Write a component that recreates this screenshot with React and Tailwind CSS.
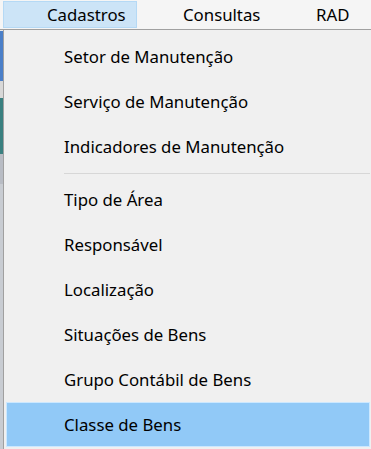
export default function App() {
  const groupA = ["Setor de Manutenção", "Serviço de Manutenção", "Indicadores de Manutenção"];
  const groupB = ["Tipo de Área", "Responsável", "Localização", "Situações de Bens", "Grupo Contábil de Bens"];
  return (
    <div className="w-[371px] h-[449px] bg-[#f0f0f0] overflow-hidden flex flex-col text-[16.8px] text-black" style={{ fontFamily: '"Noto Sans", "Open Sans", sans-serif' }}>
      <div className="h-[30px] shrink-0 flex items-start bg-[#f5f5f5] border-b border-[#a0a0a0]">
        <div className="ml-[3px] mt-[1px] h-[27px] w-[134px] bg-[#cce4f7] border border-[#b5d9f5] flex items-center pl-[43px]">Cadastros</div>
        <div className="h-[29px] w-[133px] flex items-center pl-[46px]">Consultas</div>
        <div className="h-[29px] flex items-center pl-[46px]">RAD</div>
      </div>
      <div className="flex flex-1">
        <div className="w-[3px] flex flex-col bg-[#c8ccd2]">
          <div className="h-[1px] bg-[#e8e8e8]" />
          <div className="h-[50px] bg-[#4a7fc8]" />
          <div className="h-[17px] bg-[#d8d8d8]" />
          <div className="h-[56px] bg-[#3a8080]" />
          <div className="h-[30px] bg-[#b8bcc4]" />
          <div className="flex-1 bg-[#c8ccd2]" />
        </div>
        <div className="flex-1 border-l border-[#a0a0a0] bg-[#f0f0f0] pt-[4px] pl-[2px] pr-[1px]">
          {groupA.map((t) => (
            <div key={t} className="h-[45px] flex items-center pl-[57px] border border-transparent">{t}</div>
          ))}
          <div className="h-[8px] flex items-center pl-[58px]">
            <div className="h-px w-full bg-[#d7d7d7]" />
          </div>
          {groupB.map((t) => (
            <div key={t} className="h-[45px] flex items-center pl-[57px] border border-transparent">{t}</div>
          ))}
          <div className="h-[45px] flex items-center pl-[57px] bg-[#91c9f7] border border-[#cce8ff]">Classe de Bens</div>
        </div>
      </div>
    </div>
  );
}
